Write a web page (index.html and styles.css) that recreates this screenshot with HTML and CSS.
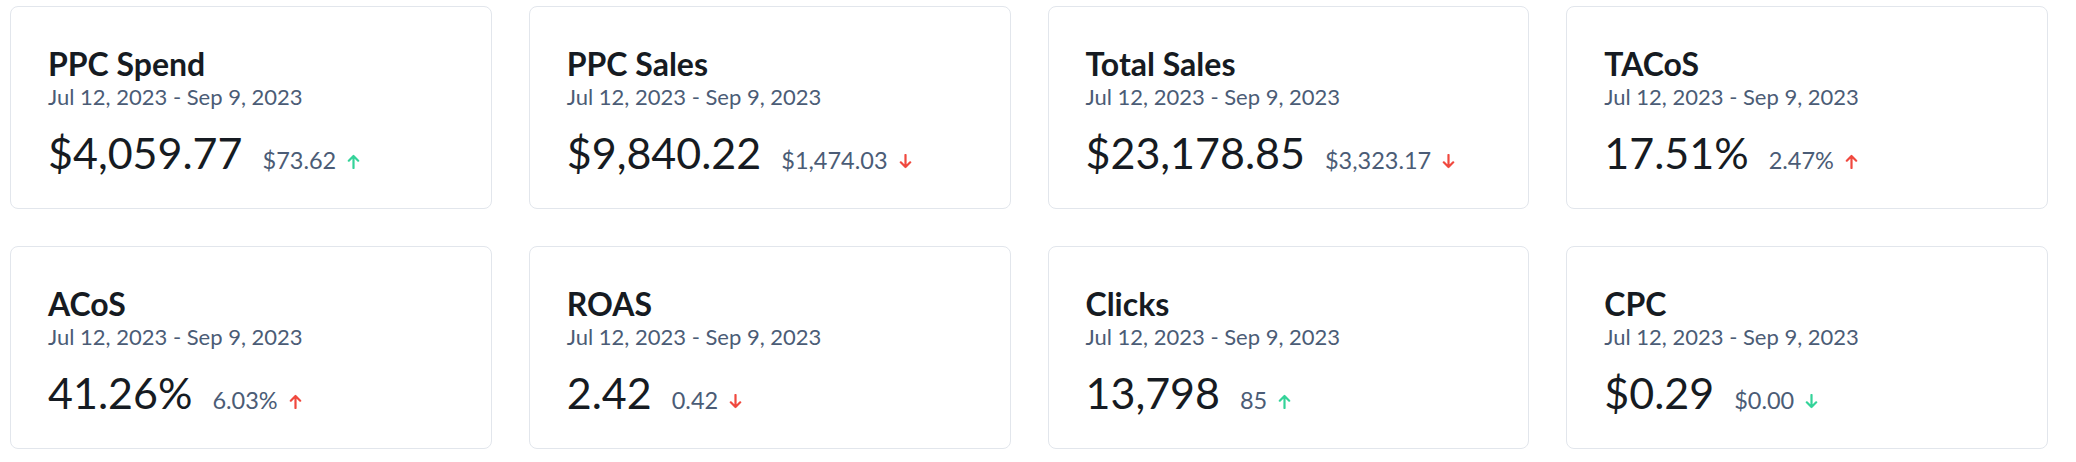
FILE: index.html
```html
<!DOCTYPE html>
<html lang="en">
<head>
<meta charset="utf-8">
<title>PPC Metrics</title>
<link rel="stylesheet" href="styles.css">
</head>
<body>
<main class="grid">
  <section class="card">
    <h2 class="title">PPC Spend</h2>
    <div class="date">Jul 12, 2023 - Sep 9, 2023</div>
    <div class="values"><span class="value">$4,059.77</span><span class="delta">$73.62</span><svg class="arrow good" viewBox="0 0 13 15"><path d="M6.5 14V2M1.8 6.7L6.5 2l4.7 4.7"/></svg></div>
  </section>
  <section class="card">
    <h2 class="title">PPC Sales</h2>
    <div class="date">Jul 12, 2023 - Sep 9, 2023</div>
    <div class="values"><span class="value">$9,840.22</span><span class="delta">$1,474.03</span><svg class="arrow bad" viewBox="0 0 13 15"><path d="M6.5 1v12M1.8 8.3L6.5 13l4.7-4.7"/></svg></div>
  </section>
  <section class="card">
    <h2 class="title">Total Sales</h2>
    <div class="date">Jul 12, 2023 - Sep 9, 2023</div>
    <div class="values"><span class="value">$23,178.85</span><span class="delta">$3,323.17</span><svg class="arrow bad" viewBox="0 0 13 15"><path d="M6.5 1v12M1.8 8.3L6.5 13l4.7-4.7"/></svg></div>
  </section>
  <section class="card">
    <h2 class="title">TACoS</h2>
    <div class="date">Jul 12, 2023 - Sep 9, 2023</div>
    <div class="values"><span class="value">17.51%</span><span class="delta">2.47%</span><svg class="arrow bad" viewBox="0 0 13 15"><path d="M6.5 14V2M1.8 6.7L6.5 2l4.7 4.7"/></svg></div>
  </section>
  <section class="card">
    <h2 class="title">ACoS</h2>
    <div class="date">Jul 12, 2023 - Sep 9, 2023</div>
    <div class="values"><span class="value">41.26%</span><span class="delta">6.03%</span><svg class="arrow bad" viewBox="0 0 13 15"><path d="M6.5 14V2M1.8 6.7L6.5 2l4.7 4.7"/></svg></div>
  </section>
  <section class="card">
    <h2 class="title">ROAS</h2>
    <div class="date">Jul 12, 2023 - Sep 9, 2023</div>
    <div class="values"><span class="value">2.42</span><span class="delta">0.42</span><svg class="arrow bad" viewBox="0 0 13 15"><path d="M6.5 1v12M1.8 8.3L6.5 13l4.7-4.7"/></svg></div>
  </section>
  <section class="card">
    <h2 class="title">Clicks</h2>
    <div class="date">Jul 12, 2023 - Sep 9, 2023</div>
    <div class="values"><span class="value">13,798</span><span class="delta">85</span><svg class="arrow good" viewBox="0 0 13 15"><path d="M6.5 14V2M1.8 6.7L6.5 2l4.7 4.7"/></svg></div>
  </section>
  <section class="card">
    <h2 class="title">CPC</h2>
    <div class="date">Jul 12, 2023 - Sep 9, 2023</div>
    <div class="values"><span class="value">$0.29</span><span class="delta">$0.00</span><svg class="arrow good" viewBox="0 0 13 15"><path d="M6.5 1v12M1.8 8.3L6.5 13l4.7-4.7"/></svg></div>
  </section>
</main>
</body>
</html>
```

FILE: styles.css
```css
* { box-sizing: border-box; }

html, body {
  margin: 0;
  background: #ffffff;
}

body {
  font-family: Lato, "Open Sans", "Liberation Sans", sans-serif;
  padding: 6px 28px 0 10px;
}

.grid {
  display: grid;
  grid-template-columns: repeat(4, 1fr);
  column-gap: 37px;
  row-gap: 37px;
}

.card {
  border: 1px solid #e2e6ec;
  border-radius: 8px;
  padding: 39px 20px 0 37px;
  display: flex;
  flex-direction: column;
  height: 203px;
}

.title {
  margin: 0;
  font-size: 32px;
  line-height: 36px;
  font-weight: 700;
  color: #161b22;
}

.date {
  font-size: 22px;
  line-height: 30px;
  color: #4b5c76;
}

.values {
  margin-top: 13px;
  display: flex;
  align-items: baseline;
}

.value {
  font-size: 43px;
  line-height: 56px;
  color: #161b22;
}

.delta {
  margin-left: 20px;
  font-size: 23.5px;
  color: #4b5c76;
}

.arrow {
  width: 13px;
  height: 15px;
  margin-left: 11px;
  margin-bottom: -1px;
  fill: none;
  stroke-width: 2.2;
  stroke-linecap: round;
  stroke-linejoin: round;
}

.good { stroke: #34d399; }
.bad { stroke: #f0483e; }
```
